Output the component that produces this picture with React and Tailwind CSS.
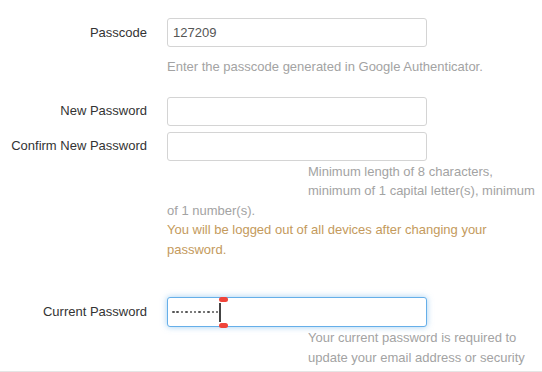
import React from 'react';

const font = { fontFamily: '"Liberation Sans", Arial, sans-serif' };

const Row = ({ label, children, className = '' }) => (
  <div className={`flex items-center ${className}`}>
    <label className="w-[147px] shrink-0 text-right text-[13px] text-[#333]">{label}</label>
    <div className="ml-[20px]">{children}</div>
  </div>
);

const Field = ({ value = '' }) => (
  <div className="w-[260px] h-[29px] rounded-[3px] border border-[#d4d4d4] bg-white px-[5px] flex items-center text-[13px] text-[#555]">
    {value}
  </div>
);

const PasswordDots = () => (
  <div className="flex items-center gap-[1.9px]">
    {Array.from({ length: 11 }).map((_, i) => (
      <span key={i} className="w-[2.5px] h-[2.5px] rounded-full bg-[#555]" />
    ))}
  </div>
);

export default function App() {
  return (
    <div className="w-[542px] h-[372px] bg-white flex flex-col" style={font}>
      <div className="h-[371px] overflow-hidden pt-[18px]">
        <Row label="Passcode">
          <Field value="127209" />
        </Row>
        <p className="pl-[167px] mt-[10px] text-[13px] leading-[19.5px] text-[#a3a3a3]">
          Enter the passcode generated in Google Authenticator.
        </p>

        <Row label="New Password" className="mt-[20px]">
          <Field />
        </Row>
        <Row label="Confirm New Password" className="mt-[6px]">
          <Field />
        </Row>
        <div className="pl-[167px] pr-[4px] mt-[1px] text-[13px] leading-[19.5px]">
          <div className="float-left w-[141px] h-[39px]" />
          <p className="text-[#a3a3a3]">
            Minimum length of 8 characters, minimum of 1 capital letter(s), minimum of 1 number(s).
          </p>
          <p className="text-[#c49a5c]">You will be logged out of all devices after changing your password.</p>
        </div>

        <Row label="Current Password" className="mt-[38px]">
          <div className="relative w-[260px] h-[30px] rounded-[3px] border border-[#66afe9] bg-white px-[4px] flex items-center shadow-[0_0_6px_rgba(102,175,233,0.6)]">
            <PasswordDots />
            <span className="ml-[1px] w-[1.5px] h-[19px] bg-[#444]" />
            <span className="absolute left-[51px] top-[-1px] w-[9px] h-[5px] rounded-full bg-[#f0443a]" />
            <span className="absolute left-[51px] bottom-[-2px] w-[9px] h-[5px] rounded-full bg-[#f0443a]" />
          </div>
        </Row>
        <div className="pl-[167px] pr-[4px] mt-[1px] text-[13px] leading-[19.5px] text-[#a3a3a3]">
          <div className="float-left w-[141px] h-[59px]" />
          <p>Your current password is required to update your email address or security settings.</p>
        </div>
      </div>
      <div className="border-t border-[#e5e5e5]" />
    </div>
  );
}
